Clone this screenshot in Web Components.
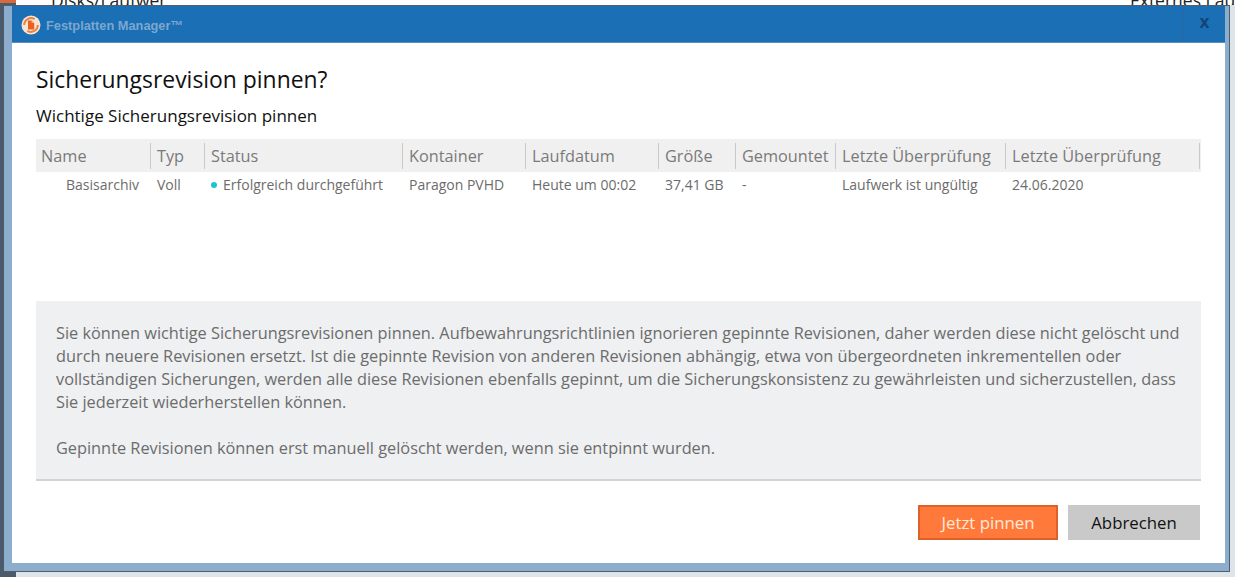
<!DOCTYPE html>
<html lang="de">
<head>
<meta charset="utf-8">
<title>Festplatten Manager</title>
<style>
  html, body { margin: 0; height: 100%; overflow: hidden; }
  body { background: #dfe4e8; font-family: "Open Sans", "Liberation Sans", sans-serif; }
</style>
</head>
<body>
<app-desktop>
  <dialog-window title-text="Festplatten Manager™">
    <dialog-heading>
      <span slot="title">Sicherungsrevision pinnen?</span>
      <span slot="subtitle">Wichtige Sicherungsrevision pinnen</span>
    </dialog-heading>
    <revision-table></revision-table>
    <info-panel>
      <p>Sie können wichtige Sicherungsrevisionen pinnen. Aufbewahrungsrichtlinien ignorieren gepinnte Revisionen, daher werden diese nicht gelöscht und<br>durch neuere Revisionen ersetzt. Ist die gepinnte Revision von anderen Revisionen abhängig, etwa von übergeordneten inkrementellen oder<br>vollständigen Sicherungen, werden alle diese Revisionen ebenfalls gepinnt, um die Sicherungskonsistenz zu gewährleisten und sicherzustellen, dass<br>Sie jederzeit wiederherstellen können.</p>
      <p>Gepinnte Revisionen können erst manuell gelöscht werden, wenn sie entpinnt wurden.</p>
    </info-panel>
    <dialog-actions>
      <action-button kind="primary">Jetzt pinnen</action-button>
      <action-button>Abbrechen</action-button>
    </dialog-actions>
  </dialog-window>
</app-desktop>

<script>
class AppDesktop extends HTMLElement {
  constructor() {
    super();
    this.attachShadow({ mode: 'open' });
    this.shadowRoot.innerHTML = `
      <style>
        :host {
          display: block;
          position: relative;
          width: 1235px;
          height: 577px;
          overflow: hidden;
          background: #dfe4e8;
        }
        .back {
          position: absolute;
          left: 0;
          top: 0;
          width: 1235px;
          height: 5px;
          background: #fff;
          overflow: hidden;
        }
        .back span {
          position: absolute;
          top: -10px;
          font: 17.5px/20px "Open Sans", "Liberation Sans", sans-serif;
          color: #222;
          white-space: nowrap;
        }
        .orange {
          position: absolute;
          left: 0;
          top: 0;
          width: 16px;
          height: 3px;
          background: #d9683a;
        }
        .side {
          position: absolute;
          left: 0;
          top: 3px;
          width: 16px;
          height: 574px;
          background: #4b5b6b;
        }
        .win {
          position: absolute;
          left: 4px;
          top: 5px;
        }
      </style>
      <div class="back">
        <span style="left:51px">Disks/Laufwer</span>
        <span style="left:1130px">Externes Lau</span>
      </div>
      <div class="orange"></div>
      <div class="side"></div>
      <div class="win"><slot></slot></div>
    `;
  }
}

class DialogWindow extends HTMLElement {
  constructor() {
    super();
    this.attachShadow({ mode: 'open' });
    this.shadowRoot.innerHTML = `
      <style>
        :host {
          display: block;
          box-sizing: border-box;
          width: 1226px;
          height: 567px;
          background: #8cadcb;
          border: 1px solid #4d5f70;
          border-left: 0;
          padding: 0 4px 8px 8px;
        }
        .frame {
          display: flex;
          flex-direction: column;
          height: 100%;
          background: #fff;
        }
        .bar {
          flex: none;
          display: flex;
          align-items: center;
          height: 36px;
          background: #1a6fb5;
          border-bottom: 1px solid #5d8db8;
          padding-left: 9px;
        }
        .bar svg { flex: none; margin-top: 1px; }
        .name {
          flex: 1;
          margin: 3px 0 0 5px;
          font: bold 12.8px "Liberation Sans", sans-serif;
          color: #7da7cf;
        }
        .close {
          flex: none;
          width: 42px;
          height: 100%;
          box-sizing: border-box;
          border-left: 1px solid #2a689f;
          display: flex;
          align-items: center;
          justify-content: center;
          padding-bottom: 5px;
          font: bold 18px/1 "Liberation Sans", sans-serif;
          color: #124373;
        }
        .body {
          flex: 1;
          display: flex;
          flex-direction: column;
          padding: 0 24px;
        }
      </style>
      <div class="frame">
        <div class="bar">
          <svg width="20" height="20" viewBox="0 0 20 20">
            <circle cx="10" cy="10" r="9.5" fill="#f7e4d4"/>
            <path d="M3.2 10a6.8 6.8 0 0 1 10.4-5.8" fill="none" stroke="#ea8443" stroke-width="2"/>
            <path d="M16.8 10a6.8 6.8 0 0 1-10.4 5.8" fill="none" stroke="#ea8443" stroke-width="2"/>
            <path d="M7 5.5h3.6l2.6 2.6v6.4H7z" fill="#e8601f"/>
            <path d="M10.6 5.5v2.6h2.6z" fill="#f6b78e"/>
          </svg>
          <span class="name"></span>
          <span class="close">x</span>
        </div>
        <div class="body"><slot></slot></div>
      </div>
    `;
    this.shadowRoot.querySelector('.name').textContent = this.getAttribute('title-text');
  }
}

class DialogHeading extends HTMLElement {
  constructor() {
    super();
    this.attachShadow({ mode: 'open' });
    this.shadowRoot.innerHTML = `
      <style>
        :host {
          display: block;
          height: 96px;
          padding-top: 22px;
          box-sizing: border-box;
          color: #111;
          white-space: nowrap;
        }
        .title { font-size: 22.9px; line-height: 30px; }
        .subtitle { font-size: 17px; line-height: 22px; margin-top: 10px; }
      </style>
      <div class="title"><slot name="title"></slot></div>
      <div class="subtitle"><slot name="subtitle"></slot></div>
    `;
  }
}

class RevisionTable extends HTMLElement {
  constructor() {
    super();
    this.attachShadow({ mode: 'open' });
    this.shadowRoot.innerHTML = `
      <style>
        :host {
          display: block;
          height: 162px;
          width: 1165px;
          white-space: nowrap;
        }
        .grid {
          display: grid;
          grid-template-columns: 115px 54px 198px 123px 133px 77px 100px 170px 195px;
          width: 1165px;
        }
        .head {
          height: 33px;
          background: #f0f0f0;
          color: #7a7a7a;
          font-size: 16.3px;
          line-height: 35px;
          padding-left: 6px;
          position: relative;
        }
        .head::after {
          content: "";
          position: absolute;
          right: 0;
          top: 4px;
          bottom: 3px;
          width: 1px;
          background: #c9c9c9;
        }
        .head:last-of-type::after { right: 1px; }
        .head:first-child { padding-left: 5px; }
        .cell {
          color: #6c6c6c;
          font-size: 14px;
          line-height: 26px;
          padding-left: 6px;
        }
        .cell.first { padding-left: 30px; }
        .dot {
          display: inline-block;
          width: 6px;
          height: 6px;
          border-radius: 50%;
          background: #19c5d0;
          margin-right: 6px;
          vertical-align: 2px;
        }
      </style>
      <div class="grid"></div>
    `;
    const heads = ['Name', 'Typ', 'Status', 'Kontainer', 'Laufdatum', 'Größe', 'Gemountet', 'Letzte Überprüfung', 'Letzte Überprüfung'];
    const row = ['Basisarchiv', 'Voll', 'Erfolgreich durchgeführt', 'Paragon PVHD', 'Heute um 00:02', '37,41 GB', '-', 'Laufwerk ist ungültig', '24.06.2020'];
    const grid = this.shadowRoot.querySelector('.grid');

    heads.forEach((text) => {
      const el = document.createElement('div');
      el.className = 'head';
      el.textContent = text;
      grid.appendChild(el);
    });

    row.forEach((text, i) => {
      const el = document.createElement('span');
      el.className = i === 0 ? 'cell first' : 'cell';
      if (i === 2) {
        const dot = document.createElement('span');
        dot.className = 'dot';
        el.appendChild(dot);
      }
      el.appendChild(document.createTextNode(text));
      grid.appendChild(el);
    });
  }
}

class InfoPanel extends HTMLElement {
  constructor() {
    super();
    this.attachShadow({ mode: 'open' });
    this.shadowRoot.innerHTML = `
      <style>
        :host {
          display: block;
          box-sizing: border-box;
          width: 1165px;
          height: 180px;
          padding: 21px 20px 0;
          background: #eef0f2;
          border-bottom: 2px solid #d3d3d3;
          color: #6c6c6c;
          font-size: 16.32px;
          line-height: 23px;
          white-space: nowrap;
        }
        ::slotted(p) { margin: 0 0 23px; }
      </style>
      <slot></slot>
    `;
  }
}

class DialogActions extends HTMLElement {
  constructor() {
    super();
    this.attachShadow({ mode: 'open' });
    this.shadowRoot.innerHTML = `
      <style>
        :host {
          display: flex;
          justify-content: flex-end;
          gap: 10px;
          width: 1164px;
          padding-top: 24px;
        }
      </style>
      <slot></slot>
    `;
  }
}

class ActionButton extends HTMLElement {
  constructor() {
    super();
    this.attachShadow({ mode: 'open' });
    this.shadowRoot.innerHTML = `
      <style>
        :host {
          display: flex;
          align-items: center;
          justify-content: center;
          box-sizing: border-box;
          width: 132px;
          height: 35px;
          background: #c9c9c9;
          color: #111;
          font-size: 16.8px;
        }
        :host([kind="primary"]) {
          width: 140px;
          background: #ff7a3a;
          border: 2px solid #e0602a;
          color: #ffe9dc;
        }
      </style>
      <slot></slot>
    `;
  }
}

customElements.define('app-desktop', AppDesktop);
customElements.define('dialog-window', DialogWindow);
customElements.define('dialog-heading', DialogHeading);
customElements.define('revision-table', RevisionTable);
customElements.define('info-panel', InfoPanel);
customElements.define('dialog-actions', DialogActions);
customElements.define('action-button', ActionButton);
</script>
</body>
</html>
